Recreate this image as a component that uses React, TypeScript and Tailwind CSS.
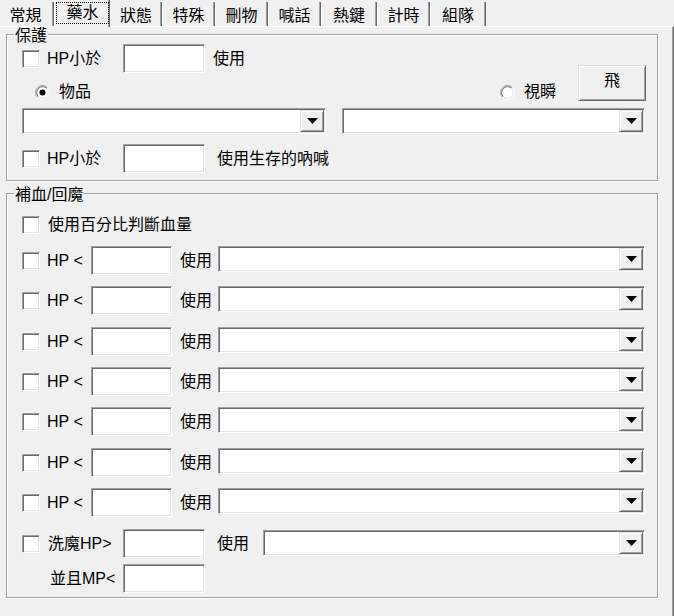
import React from "react";

// classic win32 3d edges
const SUNKEN =
  "border border-t-[#a0a0a0] border-l-[#a0a0a0] border-r-white border-b-white shadow-[inset_1px_1px_0_#696969,inset_-1px_-1px_0_#e3e3e3]";
const RAISED =
  "border border-t-[#e3e3e3] border-l-[#e3e3e3] border-r-[#696969] border-b-[#696969] shadow-[inset_1px_1px_0_#fff,inset_-1px_-1px_0_#a0a0a0]";

const tabs = [
  { label: "常規", w: "w-[57px]" },
  { label: "藥水", w: "w-[56px]", selected: true },
  { label: "狀態", w: "w-[52px]" },
  { label: "特殊", w: "w-[53px]" },
  { label: "刪物", w: "w-[53px]" },
  { label: "喊話", w: "w-[53px]" },
  { label: "熱鍵", w: "w-[56px]" },
  { label: "計時", w: "w-[53px]" },
  { label: "組隊", w: "w-[56px]" },
];

function Tab({ label, w, selected }: { label: string; w: string; selected?: boolean }) {
  if (selected) {
    return (
      <div
        className={`${w} h-[27px] mb-[-1px] flex items-start pt-[2px] pl-[1px] bg-[#f0f0f0] border-l border-l-white border-r border-r-[#696969] shadow-[inset_-1px_0_0_#a0a0a0]`}
      >
        <span className="w-full h-[22px] flex items-center justify-center border border-dotted border-black">
          {label}
        </span>
      </div>
    );
  }
  return (
    <div
      className={`${w} h-[24px] flex items-center justify-center pt-[4px] border-l border-l-white border-r border-r-[#696969] shadow-[inset_-1px_0_0_#a0a0a0]`}
    >
      {label}
    </div>
  );
}

function CheckBox() {
  return <span className={`block w-[18px] h-[18px] shrink-0 bg-white ${SUNKEN}`} />;
}

function Radio({ checked }: { checked?: boolean }) {
  return (
    <svg width="15" height="15" viewBox="0 0 15 15" className="shrink-0">
      <circle cx="7.5" cy="7.5" r="6.5" fill="#fff" />
      <path d="M2.55 12.45 A7 7 0 0 1 12.45 2.55" fill="none" stroke="#a0a0a0" strokeWidth="1" />
      <path d="M12.45 2.55 A7 7 0 0 1 2.55 12.45" fill="none" stroke="#fff" strokeWidth="1" />
      <path d="M3.26 11.74 A6 6 0 0 1 11.74 3.26" fill="none" stroke="#696969" strokeWidth="1" />
      <path d="M11.74 3.26 A6 6 0 0 1 3.26 11.74" fill="none" stroke="#e3e3e3" strokeWidth="1" />
      {checked && <circle cx="7.5" cy="7.5" r="3" fill="#000" />}
    </svg>
  );
}

function TextBox({ w }: { w: string }) {
  return <span className={`block ${w} h-[29px] shrink-0 bg-white ${SUNKEN}`} />;
}

function Combo({ className }: { className: string }) {
  return (
    <div className={`flex justify-end h-[26px] p-[1px] bg-white shrink-0 ${SUNKEN} ${className}`}>
      <span className={`flex items-center justify-center w-[24px] h-[22px] bg-[#f0f0f0] ${RAISED}`}>
        <svg width="11" height="6" viewBox="0 0 11 6">
          <polygon points="0,0 11,0 5.5,6" fill="#000" />
        </svg>
      </span>
    </div>
  );
}

function GroupTitle({ children }: { children: React.ReactNode }) {
  return (
    <span className="absolute left-[7px] -top-[7px] px-[1px] bg-[#f0f0f0] leading-[16px]">
      {children}
    </span>
  );
}

function HpRow({ mt }: { mt: string }) {
  return (
    <div className={`flex items-center h-[29px] pl-[15px] ${mt}`}>
      <CheckBox />
      <span className="ml-[7px] w-[44px]">HP &lt;</span>
      <TextBox w="w-[81px]" />
      <span className="ml-[8px] w-[32px]">使用</span>
      <Combo className="ml-[6px] w-[427px] self-start" />
    </div>
  );
}

export default function App() {
  return (
    <div className="w-[674px] h-[616px] overflow-hidden bg-[#f0f0f0] text-black text-[16px] leading-[16px] [font-family:'Liberation_Sans','Noto_Sans_CJK_TC',sans-serif]">
      <div className="relative z-10 flex items-end h-[26px] ml-[-3px]">
        {tabs.map((t) => (
          <Tab key={t.label} {...t} />
        ))}
      </div>

      <div className="h-[590px] pt-[7px] pl-[6px] border-t border-t-white border-r border-r-[#696969] shadow-[inset_-1px_0_0_#a0a0a0]">
        {/* 保護 */}
        <div className="relative w-[652px] h-[147px] border border-[#a0a0a0] shadow-[inset_1px_1px_0_#fff,1px_1px_0_#fff]">
          <GroupTitle>保護</GroupTitle>

          <div className="flex items-center h-[29px] mt-[9px] pl-[15px]">
            <CheckBox />
            <span className="ml-[7px] w-[76px]">HP小於</span>
            <TextBox w="w-[82px]" />
            <span className="ml-[8px]">使用</span>
          </div>

          <div className="flex items-end h-[36px] mt-[-8px]">
            <div className="flex items-center h-[16px] ml-[28px] mb-[1px]">
              <Radio checked />
              <span className="ml-[9px]">物品</span>
            </div>
            <div className="flex items-center h-[16px] ml-auto mb-[1px]">
              <Radio />
              <span className="ml-[9px]">視瞬</span>
            </div>
            <button
              className={`ml-[22px] mr-[11px] w-[68px] h-[36px] pb-[5px] flex items-center justify-center bg-[#f0f0f0] ${RAISED}`}
            >
              飛
            </button>
          </div>

          <div className="flex mt-[7px]">
            <Combo className="ml-[15px] w-[304px]" />
            <Combo className="ml-[16px] w-[303px]" />
          </div>

          <div className="flex items-center h-[29px] mt-[10px] pl-[15px]">
            <CheckBox />
            <span className="ml-[7px] w-[76px]">HP小於</span>
            <TextBox w="w-[82px]" />
            <span className="ml-[12px]">使用生存的吶喊</span>
          </div>
        </div>

        {/* 補血/回魔 */}
        <div className="relative mt-[12px] w-[652px] h-[405px] border border-[#a0a0a0] shadow-[inset_1px_1px_0_#fff,1px_1px_0_#fff]">
          <GroupTitle>補血/回魔</GroupTitle>

          <div className="flex items-center h-[29px] mt-[16px] pl-[15px]">
            <CheckBox />
            <span className="ml-[8px]">使用百分比判斷血量</span>
          </div>

          <HpRow mt="mt-[7px]" />
          <HpRow mt="mt-[11px]" />
          <HpRow mt="mt-[12px]" />
          <HpRow mt="mt-[11px]" />
          <HpRow mt="mt-[11px]" />
          <HpRow mt="mt-[12px]" />
          <HpRow mt="mt-[11px]" />

          <div className="flex items-center h-[29px] mt-[12px] pl-[15px]">
            <CheckBox />
            <span className="ml-[8px] w-[75px]">洗魔HP&gt;</span>
            <TextBox w="w-[82px]" />
            <span className="ml-[12px] w-[32px]">使用</span>
            <Combo className="ml-[14px] mt-[1px] w-[382px] self-start" />
          </div>

          <div className="flex items-center h-[29px] mt-[6px]">
            <span className="ml-[43px] w-[73px]">並且MP&lt;</span>
            <TextBox w="w-[82px]" />
          </div>
        </div>
      </div>
    </div>
  );
}
